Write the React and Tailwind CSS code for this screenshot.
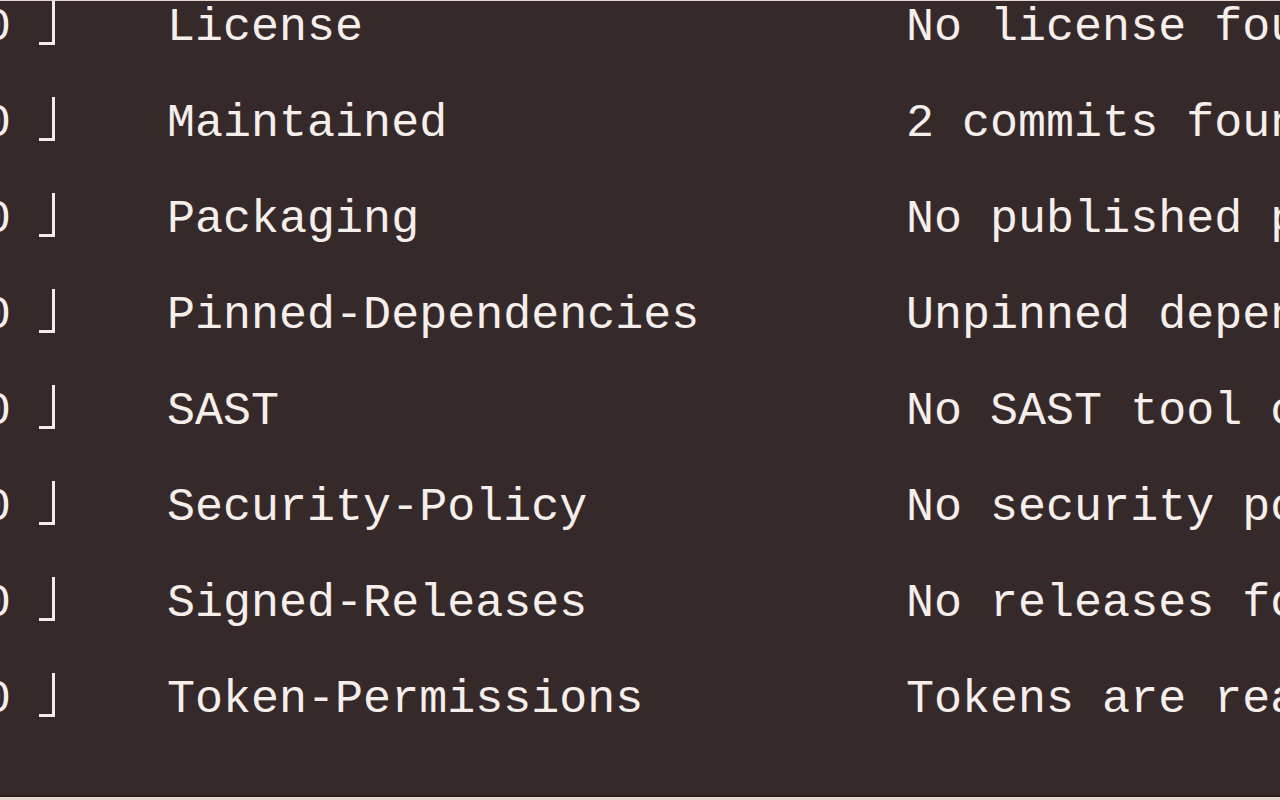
import React from 'react';

// Scorecard check results, as shown in the zoomed terminal view
const checks = [
    { name: 'License', detail: 'No license found' },
    { name: 'Maintained', detail: '2 commits found in the last 90 days' },
    { name: 'Packaging', detail: 'No published package detected' },
    { name: 'Pinned-Dependencies', detail: 'Unpinned dependencies detected' },
    { name: 'SAST', detail: 'No SAST tool configured' },
    { name: 'Security-Policy', detail: 'No security policy file detected' },
    { name: 'Signed-Releases', detail: 'No releases found' },
    { name: 'Token-Permissions', detail: 'Tokens are read-only' },
];

const CheckRow = ({ name, detail }) => (
    <div className="flex h-[96px] items-center whitespace-nowrap leading-[96px]">
        {/* Score cell: cut-off digit and closing bracket */}
        <div className="relative h-full w-[167px] shrink-0">
            <span className="absolute left-[-17px] top-0">0</span>
            <span className="absolute left-[39px] top-[21px] h-[44px] w-[16px] border-r-[3px] border-b-[3px] border-[#f3ece9]" />
        </div>
        <div className="w-[739px] shrink-0">{name}</div>
        <div className="overflow-hidden">{detail}</div>
    </div>
);

const App = () => {
    return (
        <div className="h-[800px] w-[1280px] overflow-hidden bg-[#352a29] border-t border-[#e6d6d0]">
            <div className="flex h-[796px] flex-col overflow-hidden border-b-2 border-[#271e1d]">
                <div className="-mt-[21px] text-[46.7px] text-[#f5efec] font-['Liberation_Mono',monospace]">
                    {checks.map((check) => (
                        <CheckRow key={check.name} {...check} />
                    ))}
                </div>
            </div>
            <div className="h-[3px] bg-[#e6d6d0]" />
        </div>
    );
};

export default App;
